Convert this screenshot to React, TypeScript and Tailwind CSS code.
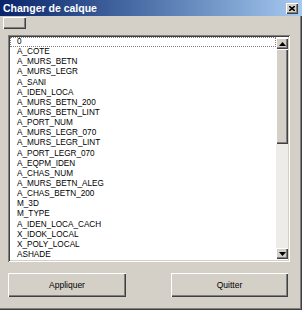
import React from 'react';

const layers = [
  '0',
  'A_COTE',
  'A_MURS_BETN',
  'A_MURS_LEGR',
  'A_SANI',
  'A_IDEN_LOCA',
  'A_MURS_BETN_200',
  'A_MURS_BETN_LINT',
  'A_PORT_NUM',
  'A_MURS_LEGR_070',
  'A_MURS_LEGR_LINT',
  'A_PORT_LEGR_070',
  'A_EQPM_IDEN',
  'A_CHAS_NUM',
  'A_MURS_BETN_ALEG',
  'A_CHAS_BETN_200',
  'M_3D',
  'M_TYPE',
  'A_IDEN_LOCA_CACH',
  'X_IDOK_LOCAL',
  'X_POLY_LOCAL',
  'ASHADE',
];

const raised =
  'bg-[#d4d0c8] shadow-[inset_1px_1px_0_#ffffff,inset_-1px_-1px_0_#404040,inset_-2px_-2px_0_#808080]';

function Arrow({ up }: { up?: boolean }) {
  return (
    <div className={`h-[11px] shrink-0 flex items-center justify-center ${raised}`}>
      <svg width="7" height="4" viewBox="0 0 7 4">
        {up ? <path d="M3.5 0 L7 4 L0 4 Z" fill="#000" /> : <path d="M0 0 L7 0 L3.5 4 Z" fill="#000" />}
      </svg>
    </div>
  );
}

export default function App() {
  return (
    <div
      className="w-[302px] h-[310px] bg-[#d4d0c8] flex flex-col shadow-[inset_-1px_-1px_0_#404040,inset_-2px_-2px_0_#808080] text-black"
      style={{ fontFamily: '"Liberation Sans", Arial, sans-serif' }}
    >
      <div className="h-[16px] flex items-center justify-between pl-[3px] pr-[4px] bg-linear-to-r from-[#0a246a] to-[#a6caf0]">
        <span className="text-white font-bold text-[10.5px] leading-none">Changer de calque</span>
        <div className={`w-[12px] h-[11px] flex items-center justify-center ${raised}`}>
          <svg width="6" height="5" viewBox="0 0 6 5">
            <path d="M0 0 L6 5 M6 0 L0 5" stroke="#000" strokeWidth="1.6" />
          </svg>
        </div>
      </div>

      <div className={`mt-[1px] ml-[3px] w-[23px] h-[12px] ${raised}`} />

      <div className="mt-[6px] ml-[8px] w-[282px] h-[227px] bg-white flex p-[2px] shadow-[inset_1px_1px_0_#808080,inset_-1px_-1px_0_#ffffff,inset_2px_2px_0_#404040,inset_-2px_-2px_0_#d4d0c8]">
        <div className="flex-1 flex flex-col overflow-hidden">
          {layers.map((name, i) => (
            <div
              key={name}
              className={`h-[10.15px] shrink-0 flex items-center pl-[7px] text-[8.2px] leading-none ${
                i === 0 ? 'outline outline-1 outline-dotted outline-[#808080] -outline-offset-1' : ''
              }`}
            >
              {name}
            </div>
          ))}
        </div>
        <div className="w-[12px] flex flex-col pt-[1px] pb-[1px]">
          <Arrow up />
          <div className={`h-[95px] shrink-0 ${raised}`} />
          <div className="flex-1 bg-[#eeece9]" />
          <Arrow />
        </div>
      </div>

      <div className="mt-[11px] flex px-[8px] justify-between">
        <div className={`w-[118px] h-[24px] flex items-center justify-center text-[8.5px] ${raised}`}>Appliquer</div>
        <div className={`w-[117px] h-[24px] mr-[6px] flex items-center justify-center text-[8.5px] ${raised}`}>Quitter</div>
      </div>
    </div>
  );
}
